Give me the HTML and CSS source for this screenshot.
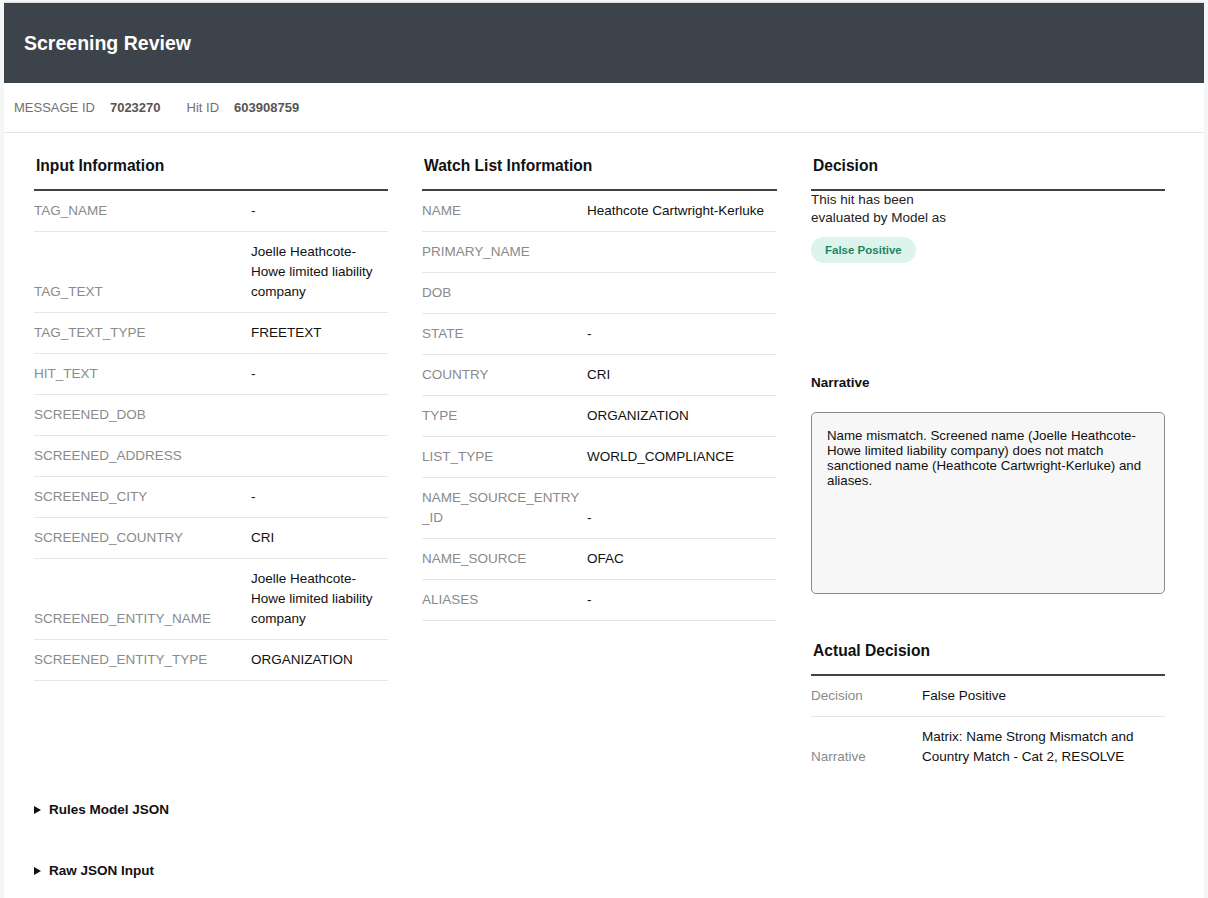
FILE: index.html
```html
<!DOCTYPE html>
<html lang="en">
<head>
<meta charset="utf-8">
<title>Screening Review</title>
<link rel="stylesheet" href="styles.css">
</head>
<body>
<div class="page">
  <header class="topbar">
    <h1 class="topbar-title">Screening Review</h1>
  </header>

  <div class="meta">
    <span class="meta-label">MESSAGE ID</span><span class="meta-value">7023270</span>
    <span class="meta-label meta-label-next">Hit ID</span><span class="meta-value">603908759</span>
  </div>

  <main class="columns">
    <section class="panel">
      <h2 class="panel-title">Input Information</h2>
      <table class="kv kv-input">
        <colgroup><col class="col-label"><col></colgroup>
        <tbody>
          <tr><th>TAG_NAME</th><td>-</td></tr>
          <tr><th>TAG_TEXT</th><td>Joelle Heathcote-Howe limited liability company</td></tr>
          <tr><th>TAG_TEXT_TYPE</th><td>FREETEXT</td></tr>
          <tr><th>HIT_TEXT</th><td>-</td></tr>
          <tr><th>SCREENED_DOB</th><td></td></tr>
          <tr><th>SCREENED_ADDRESS</th><td></td></tr>
          <tr><th>SCREENED_CITY</th><td>-</td></tr>
          <tr><th>SCREENED_COUNTRY</th><td>CRI</td></tr>
          <tr><th>SCREENED_ENTITY_NAME</th><td>Joelle Heathcote-Howe limited liability company</td></tr>
          <tr><th>SCREENED_ENTITY_TYPE</th><td>ORGANIZATION</td></tr>
        </tbody>
      </table>
    </section>

    <section class="panel">
      <h2 class="panel-title">Watch List Information</h2>
      <table class="kv kv-watch">
        <colgroup><col class="col-label"><col></colgroup>
        <tbody>
          <tr><th>NAME</th><td>Heathcote Cartwright-Kerluke</td></tr>
          <tr><th>PRIMARY_NAME</th><td></td></tr>
          <tr><th>DOB</th><td></td></tr>
          <tr><th>STATE</th><td>-</td></tr>
          <tr><th>COUNTRY</th><td>CRI</td></tr>
          <tr><th>TYPE</th><td>ORGANIZATION</td></tr>
          <tr><th>LIST_TYPE</th><td>WORLD_COMPLIANCE</td></tr>
          <tr><th>NAME_SOURCE_ENTRY_ID</th><td>-</td></tr>
          <tr><th>NAME_SOURCE</th><td>OFAC</td></tr>
          <tr><th>ALIASES</th><td>-</td></tr>
        </tbody>
      </table>
    </section>

    <section class="panel">
      <h2 class="panel-title">Decision</h2>
      <p class="model-text">This hit has been evaluated by Model as</p>
      <div class="badge-row"><span class="badge">False Positive</span></div>

      <h3 class="narrative-label">Narrative</h3>
      <div class="narrative-box">Name mismatch. Screened name (Joelle Heathcote-Howe limited liability company) does not match sanctioned name (Heathcote Cartwright-Kerluke) and aliases.</div>

      <h2 class="panel-title panel-title-actual">Actual Decision</h2>
      <table class="kv kv-actual">
        <colgroup><col class="col-label"><col></colgroup>
        <tbody>
          <tr><th>Decision</th><td>False Positive</td></tr>
          <tr><th>Narrative</th><td>Matrix: Name Strong Mismatch and Country Match - Cat 2, RESOLVE</td></tr>
        </tbody>
      </table>
    </section>
  </main>

  <div class="details-list">
    <details class="json-block"><summary>Rules Model JSON</summary></details>
    <details class="json-block"><summary>Raw JSON Input</summary></details>
  </div>
</div>
</body>
</html>
```

FILE: styles.css
```css
html, body {
  margin: 0;
  padding: 0;
}

body {
  background: #f5f6f8;
  font-family: "Liberation Sans", Arial, sans-serif;
  color: #111;
  padding: 2px 4px 0;
}

.page {
  background: #fff;
  border-top: 1px solid #dcdcdc;
  min-height: 900px;
}

.topbar {
  background: #3d434b;
  height: 80px;
  display: flex;
  align-items: center;
  padding: 0 20px;
}

.topbar-title {
  margin: 0;
  color: #fff;
  font-size: 19.5px;
  font-weight: bold;
  line-height: 24px;
}

.meta {
  height: 49px;
  display: flex;
  align-items: center;
  padding: 0 10px;
  border-bottom: 1px solid #e6e6e6;
  font-size: 13px;
}

.meta-label {
  color: #707070;
}

.meta-label-next {
  margin-left: 26px;
}

.meta-value {
  color: #555;
  font-weight: bold;
  margin-left: 15px;
}

.columns {
  display: grid;
  grid-template-columns: 354px 355px 354px;
  column-gap: 34px;
  padding: 22px 30px 2px;
  align-items: start;
}

.panel-title {
  margin: 0;
  padding: 1px 2px 13px;
  font-size: 15.6px;
  line-height: 20px;
  font-weight: bold;
  color: #111;
  border-bottom: 2px solid #3d434b;
}

.kv-watch,
.panel-title-watch {
  width: 354px;
}

.panel-title-actual {
  margin-top: 46px;
}

.kv {
  width: 354px;
  border-collapse: collapse;
  table-layout: fixed;
  font-size: 13.5px;
  line-height: 20px;
}

.kv th,
.kv td {
  padding: 10px 0;
  text-align: left;
  vertical-align: bottom;
  border-bottom: 1px solid #e6e6e6;
}

.kv th {
  font-weight: normal;
  color: #8a8a8a;
}

.kv td {
  color: #111;
}

.kv-input .col-label {
  width: 217px;
}

.kv-watch .col-label {
  width: 165px;
}

.kv-watch th {
  padding-right: 3px;
  word-break: break-all;
}

.kv-actual .col-label {
  width: 111px;
}

.kv-actual tr:last-child th,
.kv-actual tr:last-child td {
  border-bottom: none;
}

.model-text {
  margin: 0;
  width: 150px;
  font-size: 13.5px;
  line-height: 18px;
  color: #222;
}

.badge-row {
  margin-top: 10px;
}

.badge {
  display: inline-block;
  height: 26px;
  line-height: 26px;
  padding: 0 14px;
  border-radius: 13px;
  background: #dcf4ec;
  color: #1d8660;
  font-size: 11.5px;
  font-weight: bold;
}

.narrative-label {
  margin: 110px 0 0;
  font-size: 13.5px;
  line-height: 20px;
  font-weight: bold;
  color: #111;
}

.narrative-box {
  margin-top: 19px;
  height: 182px;
  box-sizing: border-box;
  padding: 15px 15px;
  border: 1px solid #8a8a8a;
  border-radius: 5px;
  background: #f7f7f7;
  font-size: 13.3px;
  line-height: 15px;
  color: #111;
}

.details-list {
  padding: 1px 30px 0;
}

.json-block {
  padding: 20px 0;
}

.json-block + .json-block {
  margin-top: 1px;
}

.json-block summary {
  list-style: none;
  display: flex;
  align-items: center;
  font-size: 13.5px;
  line-height: 20px;
  font-weight: bold;
  color: #111;
  cursor: pointer;
}

.json-block summary::-webkit-details-marker {
  display: none;
}

.json-block summary::before {
  content: "";
  width: 0;
  height: 0;
  border-top: 4px solid transparent;
  border-bottom: 4px solid transparent;
  border-left: 7px solid #111;
  margin-right: 8px;
}
```
